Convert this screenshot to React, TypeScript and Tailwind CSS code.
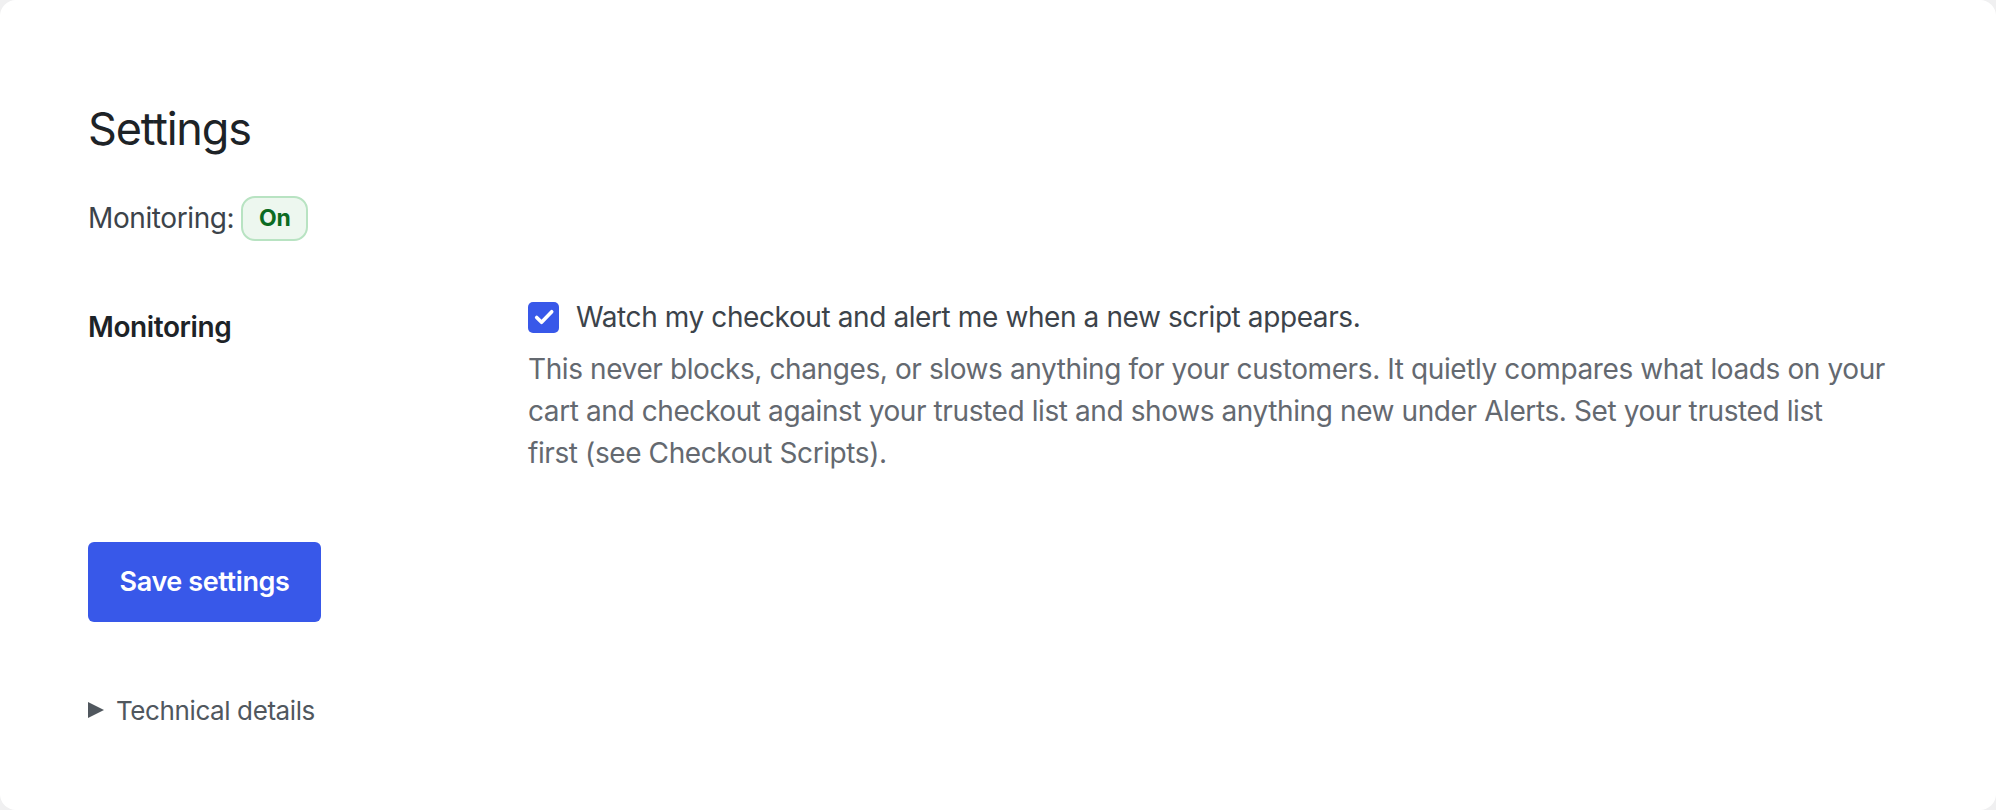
import React from "react";

function CheckIcon() {
  return (
    <svg viewBox="0 0 32 32" className="h-[26px] w-[26px]" fill="none">
      <path
        d="M7 16.5l6 6L25.5 9.5"
        stroke="white"
        strokeWidth="4.4"
        strokeLinecap="round"
        strokeLinejoin="round"
      />
    </svg>
  );
}

export default function App() {
  return (
    <div
      className="min-h-[810px] bg-[#f0f0f1]"
      style={{ fontFamily: "Inter, 'Noto Sans', sans-serif" }}
    >
      <div className="flex min-h-[810px] flex-col rounded-[16px] bg-white px-[88px] pt-[99px] tracking-[-0.4px]">
        <h1 className="text-[45px] font-normal leading-[60px] tracking-[-1.2px] text-[#1d2327]">
          Settings
        </h1>

        <div className="mt-[36px] flex h-[46px] items-center gap-[7px] text-[28px] text-[#3c434a]">
          <span>Monitoring:</span>
          <span className="flex h-[45px] w-[67px] items-center justify-center rounded-[14px] border-2 border-[#b8e3c2] bg-[#edf7ef] text-[23px] font-bold text-[#0b6b22]">
            On
          </span>
        </div>

        <div className="mt-[25px] flex">
          <div className="w-[440px] shrink-0 pb-[30px] pt-[40px] text-[28px] font-semibold leading-[42px] text-[#1d2327]">
            Monitoring
          </div>
          <div className="max-w-[1400px] pb-[30px] pt-[30px]">
            <label className="flex h-[42px] items-center gap-[17px] text-[28px] text-[#3c434a]">
              <span className="flex h-[31px] w-[31px] items-center justify-center rounded-[5px] bg-[#3858e9]">
                <CheckIcon />
              </span>
              <span>Watch my checkout and alert me when a new script appears.</span>
            </label>
            <p className="mt-[10px] text-[28px] leading-[42px] text-[#646970]">
              This never blocks, changes, or slows anything for your customers. It quietly
              compares what loads on your
              <br />
              cart and checkout against your trusted list and shows anything new under Alerts.
              Set your trusted list
              <br />
              first (see Checkout Scripts).
            </p>
          </div>
        </div>

        <div className="mt-[38px]">
          <button
            type="button"
            className="h-[80px] w-[233px] rounded-[6px] bg-[#3858e9] text-[27px] font-semibold text-white"
          >
            Save settings
          </button>
        </div>

        <div className="mt-[67px] flex h-[42px] items-center gap-[12px] text-[26px] text-[#50575e]">
          <svg viewBox="0 0 16 16" className="h-[16px] w-[16px]" fill="#50575e">
            <polygon points="0,0 16,8 0,16" />
          </svg>
          <span>Technical details</span>
        </div>
      </div>
    </div>
  );
}
